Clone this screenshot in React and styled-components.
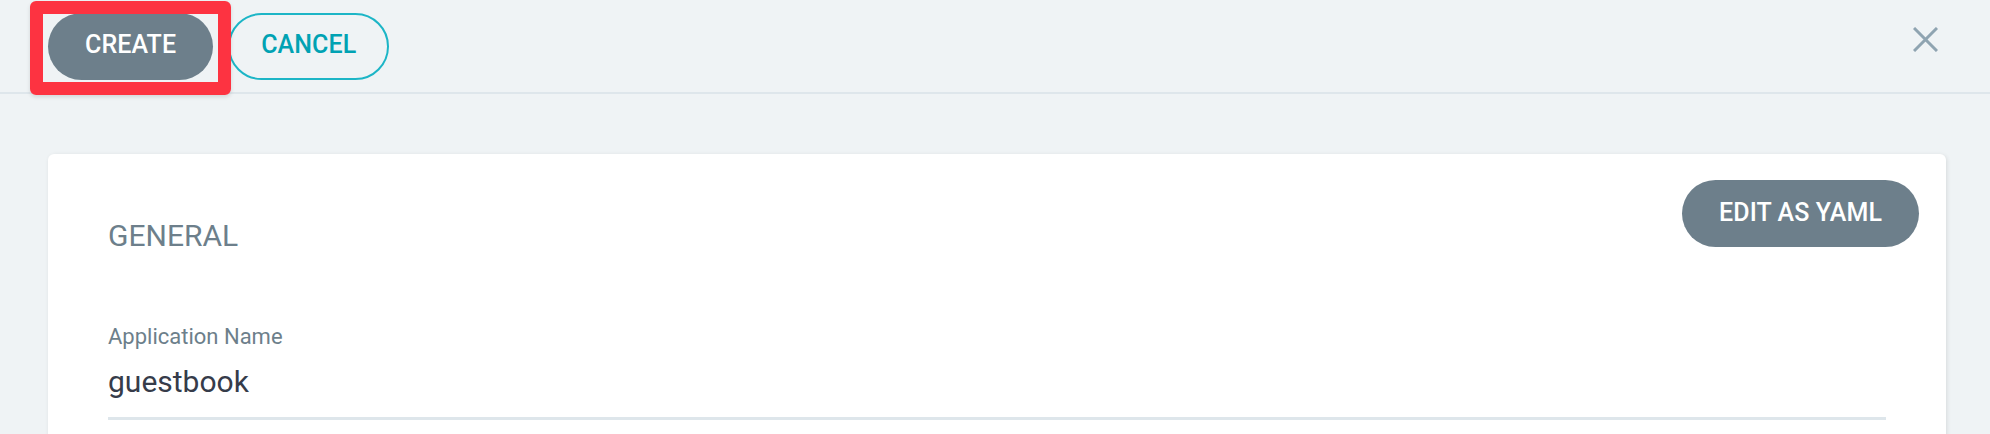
import React from "react";
import styled, { createGlobalStyle } from "styled-components";

const GlobalStyle = createGlobalStyle`
  html, body {
    margin: 0;
    padding: 0;
    background: #eff3f5;
    overflow: hidden;
    font-family: Roboto, "Liberation Sans", Arial, sans-serif;
  }
  * { box-sizing: border-box; }
`;

const Page = styled.div`
  min-height: 434px;
  background: #eff3f5;
`;

const Toolbar = styled.header`
  display: flex;
  align-items: center;
  height: 94px;
  padding: 0 52px 0 48px;
  border-bottom: 2px solid #dee6eb;
  position: relative;
`;

const PillButton = styled.button`
  position: relative;
  display: inline-flex;
  align-items: center;
  justify-content: center;
  height: 67px;
  padding: 0 ${(p) => (p.$outline ? "31px" : "37px")} 3px;
  border-radius: 34px;
  border: ${(p) => (p.$outline ? "2px solid #1cb5c6" : "none")};
  background: ${(p) => (p.$outline ? "transparent" : "#6d7f8b")};
  color: ${(p) => (p.$outline ? "#00a2b3" : "#ffffff")};
  font-family: Roboto, "Liberation Sans", Arial, sans-serif;
  font-size: 25px;
  font-weight: 500;
  letter-spacing: 0.1px;
  text-transform: uppercase;
  cursor: pointer;
  margin-right: ${(p) => p.$gap || "0"};
`;

const Highlight = styled.span`
  position: absolute;
  left: -18px;
  top: -12px;
  right: -18px;
  bottom: -15px;
  border: 13px solid #fd3341;
  border-radius: 6px;
  box-shadow: 0 2px 4px rgba(0, 0, 0, 0.12);
  pointer-events: none;
  z-index: 2;
`;

const CloseButton = styled.button`
  margin-left: auto;
  align-self: flex-start;
  margin-top: 27px;
  width: 25px;
  height: 25px;
  padding: 0;
  border: none;
  background: transparent;
  color: #8fa4b1;
  cursor: pointer;
  display: flex;
`;

const Content = styled.main`
  padding: 60px 44px 0 48px;
`;

const Card = styled.section`
  position: relative;
  background: #ffffff;
  border-radius: 6px;
  box-shadow: 1px 1px 4px rgba(0, 0, 0, 0.1);
  padding: 64px 60px 60px;
`;

const CardAction = styled.div`
  position: absolute;
  top: 26px;
  right: 27px;
`;

const SectionTitle = styled.h2`
  margin: 0 0 70px;
  font-size: 30px;
  line-height: 36px;
  font-weight: 400;
  color: #6d7f8b;
  text-transform: uppercase;
`;

const FieldLabel = styled.label`
  display: block;
  font-size: 22px;
  line-height: 26px;
  color: #6d7f8b;
  margin-bottom: 14px;
`;

const FieldValue = styled.div`
  font-size: 30px;
  line-height: 36px;
  color: #363c4a;
  padding-bottom: 17px;
  border-bottom: 3px solid #dee6eb;
`;

export default function App() {
  return (
    <Page>
      <GlobalStyle />
      <Toolbar>
        <PillButton $gap="15px">
          Create
          <Highlight />
        </PillButton>
        <PillButton $outline>Cancel</PillButton>
        <CloseButton aria-label="Close">
          <svg width="25" height="25" viewBox="0 0 25 25" fill="none">
            <path d="M1 1 L24 24 M24 1 L1 24" stroke="currentColor" strokeWidth="3" />
          </svg>
        </CloseButton>
      </Toolbar>
      <Content>
        <Card>
          <CardAction>
            <PillButton>Edit as YAML</PillButton>
          </CardAction>
          <SectionTitle>General</SectionTitle>
          <FieldLabel>Application Name</FieldLabel>
          <FieldValue>guestbook</FieldValue>
        </Card>
      </Content>
    </Page>
  );
}
